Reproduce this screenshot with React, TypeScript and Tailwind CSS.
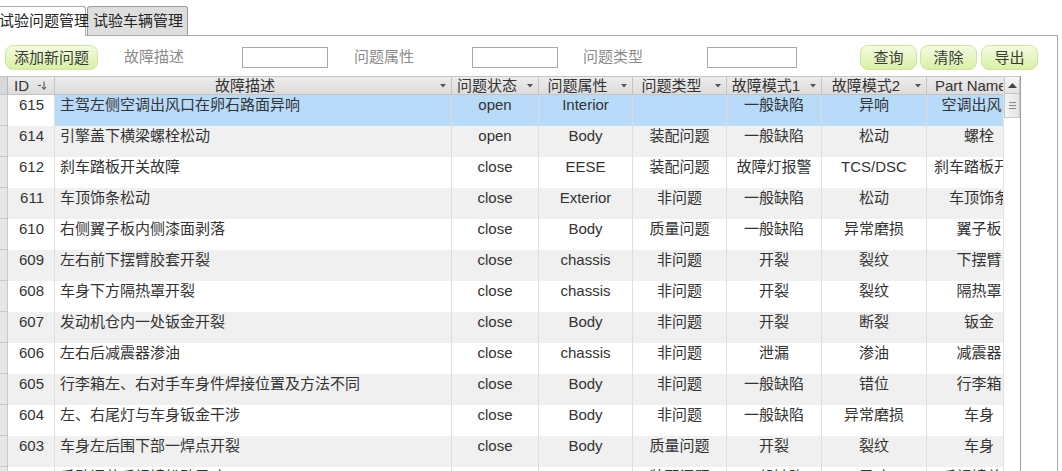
import React from 'react';

type Row = {
  id: number;
  desc: string;
  status: string;
  attr: string;
  type: string;
  mode1: string;
  mode2: string;
  part: string;
};

const ROWS: Row[] = [
  { id: 615, desc: '主驾左侧空调出风口在卵石路面异响', status: 'open', attr: 'Interior', type: '', mode1: '一般缺陷', mode2: '异响', part: '空调出风口' },
  { id: 614, desc: '引擎盖下横梁螺栓松动', status: 'open', attr: 'Body', type: '装配问题', mode1: '一般缺陷', mode2: '松动', part: '螺栓' },
  { id: 612, desc: '刹车踏板开关故障', status: 'close', attr: 'EESE', type: '装配问题', mode1: '故障灯报警', mode2: 'TCS/DSC', part: '刹车踏板开关' },
  { id: 611, desc: '车顶饰条松动', status: 'close', attr: 'Exterior', type: '非问题', mode1: '一般缺陷', mode2: '松动', part: '车顶饰条' },
  { id: 610, desc: '右侧翼子板内侧漆面剥落', status: 'close', attr: 'Body', type: '质量问题', mode1: '一般缺陷', mode2: '异常磨损', part: '翼子板' },
  { id: 609, desc: '左右前下摆臂胶套开裂', status: 'close', attr: 'chassis', type: '非问题', mode1: '开裂', mode2: '裂纹', part: '下摆臂' },
  { id: 608, desc: '车身下方隔热罩开裂', status: 'close', attr: 'chassis', type: '非问题', mode1: '开裂', mode2: '裂纹', part: '隔热罩' },
  { id: 607, desc: '发动机仓内一处钣金开裂', status: 'close', attr: 'Body', type: '非问题', mode1: '开裂', mode2: '断裂', part: '钣金' },
  { id: 606, desc: '左右后减震器渗油', status: 'close', attr: 'chassis', type: '非问题', mode1: '泄漏', mode2: '渗油', part: '减震器' },
  { id: 605, desc: '行李箱左、右对手车身件焊接位置及方法不同', status: 'close', attr: 'Body', type: '非问题', mode1: '一般缺陷', mode2: '错位', part: '行李箱' },
  { id: 604, desc: '左、右尾灯与车身钣金干涉', status: 'close', attr: 'Body', type: '非问题', mode1: '一般缺陷', mode2: '异常磨损', part: '车身' },
  { id: 603, desc: '车身左后围下部一焊点开裂', status: 'close', attr: 'Body', type: '质量问题', mode1: '开裂', mode2: '裂纹', part: '车身' },
  { id: 602, desc: '手动调节后视镜松动异响', status: 'close', attr: 'Body', type: '装配问题', mode1: '一般缺陷', mode2: '异响', part: '后视镜总成' },
];

const FONT = { fontFamily: '"Liberation Sans", "Noto Sans CJK SC", sans-serif' };

const GreenButton: React.FC<{ label: string; className?: string }> = ({ label, className }) => (
  <button
    className={`h-[25px] rounded-[8px] border border-[#cfe69a] bg-gradient-to-b from-[#f4fce0] to-[#d8f0a4] text-[15px] leading-[23px] text-[#3a3a3a] ${className ?? ''}`}
  >
    {label}
  </button>
);

const Arrow = () => (
  <span className="w-[16px] flex justify-center items-center flex-shrink-0">
    <svg width="6" height="4" viewBox="0 0 6 4">
      <path d="M0 0 L6 0 L3 3.5 Z" fill="#555" />
    </svg>
  </span>
);

const HeadCell: React.FC<{ label: string; w: string; arrow?: boolean }> = ({ label, w, arrow = true }) => (
  <div className={`${w} flex-shrink-0 h-full flex items-center border-r border-[#c4c4c4] overflow-hidden`}>
    <span className="flex-1 text-center whitespace-nowrap">{label}</span>
    {arrow && <Arrow />}
  </div>
);

const Cell: React.FC<{ w: string; align?: string; children?: React.ReactNode; extra?: string }> = ({ w, align = 'text-center', children, extra }) => (
  <div className={`${w} flex-shrink-0 h-full border-r border-[#dedede] ${align} whitespace-nowrap overflow-hidden pt-[1px] ${extra ?? ''}`}>
    {children}
  </div>
);

const App: React.FC = () => {
  return (
    <div className="w-[1062px] h-[471px] overflow-hidden bg-white text-[#333]" style={FONT}>
      {/* Tabs */}
      <div className="h-[35px] pt-[6px] flex items-end">
        <div className="-ml-[5px] h-[30px] w-[91px] bg-white border border-b-0 border-[#a8a8a8] rounded-t-[3px] text-[15px] leading-[27px] pl-[3px] whitespace-nowrap text-[#222] relative z-10 -mb-[1px]">
          试验问题管理
        </div>
        <div className="ml-[1px] h-[29px] w-[101px] bg-[#dedede] border border-b-0 border-[#9a9a9a] rounded-t-[3px] text-[15px] leading-[27px] pl-[5px] whitespace-nowrap text-[#222]">
          试验车辆管理
        </div>
      </div>

      {/* Panel */}
      <div className="w-[1058px] h-[436px] border-t border-r border-[#a8a8a8] overflow-hidden">
        {/* Toolbar */}
        <div className="mt-[9px] h-[25px] flex items-center text-[15px]">
          <GreenButton label="添加新问题" className="ml-[5px] w-[93px]" />
          <span className="ml-[26px] w-[118px] text-[#8c8c8c]">故障描述</span>
          <input className="w-[86px] h-[21px] border border-[#a9a9a9] bg-white outline-none" />
          <span className="ml-[26px] w-[118px] text-[#8c8c8c]">问题属性</span>
          <input className="w-[86px] h-[21px] border border-[#a9a9a9] bg-white outline-none" />
          <span className="ml-[25px] w-[124px] text-[#8c8c8c]">问题类型</span>
          <input className="w-[90px] h-[21px] border border-[#a9a9a9] bg-white outline-none" />
          <GreenButton label="查询" className="ml-[63px] w-[57px]" />
          <GreenButton label="清除" className="ml-[3px] w-[57px]" />
          <GreenButton label="导出" className="ml-[4px] w-[57px]" />
        </div>

        {/* Datasheet */}
        <div className="mt-[6px] w-[1021px] h-[400px] flex border-r border-[#a0a0a0] text-[15px]">
          <div className="w-[1003px] overflow-hidden flex flex-col">
            {/* Header */}
            <div className="h-[19px] flex-shrink-0 flex bg-gradient-to-b from-[#ececec] to-[#dcdcdc] border-t border-b border-[#c4c4c4] leading-[18px] text-[#333]">
              <div className="w-[8px] flex-shrink-0 h-full border-r border-[#b8b8b8] bg-[#d8d8d8]" />
              <div className="w-[47px] flex-shrink-0 h-full flex items-center border-r border-[#c4c4c4] pl-[6px]">
                <span>ID</span>
                <svg className="ml-[9px]" width="9" height="9" viewBox="0 0 9 9">
                  <path d="M0 4.5 H3" stroke="#444" strokeWidth="1" />
                  <path d="M6 0.5 V8" stroke="#444" strokeWidth="1" />
                  <path d="M4 6 L6 8.5 L8 6" stroke="#444" strokeWidth="1" fill="none" />
                </svg>
              </div>
              <HeadCell label="故障描述" w="w-[397px]" />
              <HeadCell label="问题状态" w="w-[87px]" />
              <HeadCell label="问题属性" w="w-[94px]" />
              <HeadCell label="问题类型" w="w-[94px]" />
              <HeadCell label="故障模式1" w="w-[95px]" />
              <HeadCell label="故障模式2" w="w-[105px]" />
              <div className="w-[104px] flex-shrink-0 h-full pl-[8px] whitespace-nowrap">Part Name</div>
            </div>

            {/* Rows */}
            {ROWS.map((r, i) => {
              const selected = i === 0;
              const rowBg = selected ? 'bg-[#b8dbfa]' : i % 2 === 1 ? 'bg-[#f0f0f0]' : 'bg-white';
              return (
                <div key={r.id} className={`h-[31px] flex-shrink-0 flex leading-[18px] ${rowBg}`}>
                  <div className="w-[8px] flex-shrink-0 h-full bg-[#e6e6e6] border-r border-b border-[#c8c8c8]" />
                  <Cell w="w-[47px]" align="text-right pr-[10px]" extra={selected ? 'bg-white' : ''}>{r.id}</Cell>
                  <Cell w="w-[397px]" align="text-left pl-[5px]">{r.desc}</Cell>
                  <Cell w="w-[87px]">{r.status}</Cell>
                  <Cell w="w-[94px]">{r.attr}</Cell>
                  <Cell w="w-[94px]">{r.type}</Cell>
                  <Cell w="w-[95px]">{r.mode1}</Cell>
                  <Cell w="w-[105px]">{r.mode2}</Cell>
                  <div className="w-[104px] flex-shrink-0 h-full flex justify-center pt-[1px] whitespace-nowrap">{r.part}</div>
                </div>
              );
            })}
          </div>

          {/* Vertical scrollbar */}
          <div className="w-[17px] flex-shrink-0 flex flex-col bg-white border-l border-[#e4e4e4]">
            <div className="h-[18px] border border-[#c8c8c8] bg-gradient-to-b from-[#f7f7f7] to-[#e2e2e2] flex items-center justify-center">
              <svg width="9" height="5" viewBox="0 0 9 5">
                <path d="M0 5 L4.5 0 L9 5 Z" fill="#444" />
              </svg>
            </div>
            <div className="h-[24px] border border-t-0 border-[#c8c8c8] bg-gradient-to-r from-[#f4f4f4] to-[#e4e4e4] flex flex-col items-center justify-center gap-[2px]">
              <span className="block w-[7px] h-[1px] bg-[#888]" />
              <span className="block w-[7px] h-[1px] bg-[#888]" />
              <span className="block w-[7px] h-[1px] bg-[#888]" />
            </div>
          </div>
        </div>
      </div>
    </div>
  );
};

export default App;
